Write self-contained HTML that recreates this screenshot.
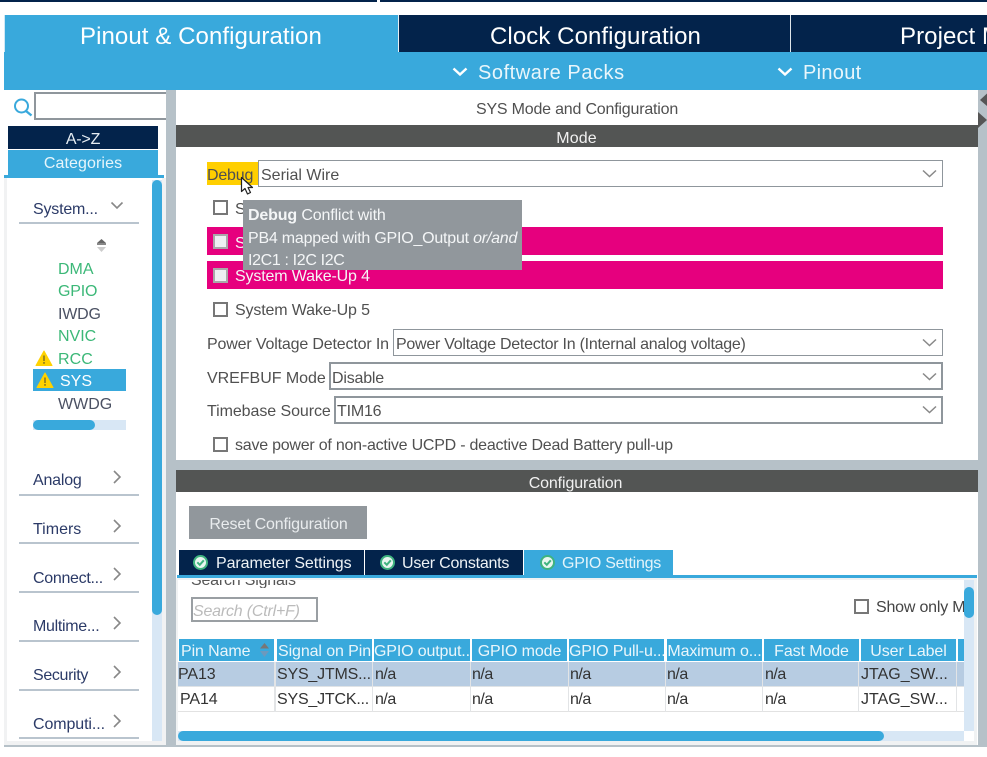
<!DOCTYPE html>
<html><head><meta charset="utf-8">
<style>
html,body{margin:0;padding:0;background:#fff}
#p{position:relative;width:987px;height:757px;overflow:hidden;background:#fff;font-family:"Liberation Sans",sans-serif;font-size:16px;color:#505050;letter-spacing:-.2px}
#p div,#p svg,#p span.a{position:absolute}
.t{white-space:nowrap;line-height:24px;height:24px}
.c{text-align:center}
.box{box-sizing:border-box;border:2px solid #8f969c;background:#fff}
.sel{box-sizing:border-box;border:2px solid #8f969c;background:#fff;height:28px}
.sel1{border-width:1px;height:27px}
.ck{box-sizing:border-box;width:15px;height:15px;border:2px solid #777;background:#fff}
.ckp{box-sizing:border-box;width:15px;height:15px;border:2px solid #a9a9a9;background:#eef0f2}
.hd{background:#39a9dc;color:#eaf6fb;height:22px;top:639px;line-height:26px;text-align:center;white-space:nowrap;overflow:hidden;letter-spacing:-.1px}
.cell{white-space:nowrap;line-height:24px;height:24px;color:#333;letter-spacing:-.1px}
.ln{background:#b9c4ce;height:2px;left:19px;width:120px}
.nav{color:#2b3a67}
.g{color:#3cb878}
.top{font-size:24px;color:#fff;height:24px;line-height:24px;letter-spacing:.08px}
.sub{font-size:20px;color:#e9f6fb;height:24px;line-height:24px}
</style></head>
<body><div id="p">
<!-- top -->
<div style="left:0;top:0;width:987px;height:2px;background:#03234b"></div>
<div style="left:377px;top:0;width:3px;height:2px;background:#fff"></div>
<div style="left:4px;top:15px;width:983px;height:75px;background:#39a9dc"></div>
<div style="left:4px;top:15px;width:1px;height:37px;background:#cfe8f5"></div>
<div style="left:399px;top:15px;width:588px;height:37px;background:#03234b"></div>
<div style="left:790px;top:15px;width:1px;height:37px;background:#dfe5ea"></div>
<div style="left:398px;top:15px;width:1px;height:37px;background:#e6edf2"></div>
<div class="t top" style="left:80px;top:25px">Pinout &amp; Configuration</div>
<div class="t top" style="left:490px;top:25px">Clock Configuration</div>
<div class="t top" style="left:900px;top:25px">Project Manager</div>
<svg style="left:452px;top:67px" width="16" height="10"><path d="M1.500 1.500L8 7.500L14.500 1.500" fill="none" stroke="#fff" stroke-width="2.400"/></svg>
<div class="t sub" style="left:478px;top:61px;letter-spacing:.55px">Software Packs</div>
<svg style="left:777px;top:67px" width="16" height="10"><path d="M1.500 1.500L8 7.500L14.500 1.500" fill="none" stroke="#fff" stroke-width="2.400"/></svg>
<div class="t sub" style="left:803px;top:61px;letter-spacing:.3px">Pinout</div>

<!-- gray structure -->
<div style="left:166px;top:90px;width:10px;height:657px;background:#b6c1c8"></div>
<div style="left:978px;top:90px;width:9px;height:657px;background:#b6c1c8"></div>
<div style="left:176px;top:460px;width:802px;height:10px;background:#b6c1c8"></div>
<div style="left:4px;top:745px;width:983px;height:2px;background:#b6c1c8"></div>
<svg style="left:978px;top:90px" width="9" height="40"><path d="M9 3.500V16L2 10Z" fill="#555"/><path d="M0 22L9 30L0 38Z" fill="#555"/></svg>

<!-- left -->
<svg style="left:12px;top:96px" width="22" height="22"><circle cx="9.500" cy="10" r="6.500" fill="none" stroke="#39a9dc" stroke-width="2"/><path d="M14 15L19.500 19.500" stroke="#39a9dc" stroke-width="2.400"/></svg>
<div class="box" style="left:34px;top:92px;width:132px;height:28px;border-right:0"></div>
<div style="left:8px;top:126px;width:150px;height:23px;background:#03234b;color:#e6edf3;text-align:center;line-height:28px;overflow:hidden">A-&gt;Z</div>
<div style="left:8px;top:150px;width:150px;height:26px;background:#39a9dc;color:#e6f5fb;text-align:center;line-height:27px;letter-spacing:.1px">Categories</div>
<div style="left:4px;top:175px;width:160px;height:3px;background:#39a9dc"></div>
<div style="left:4px;top:178px;width:162px;height:567px;background:#f1f2f3"></div>
<div style="left:7px;top:178px;width:155px;height:563px;background:#fff"></div>
<div style="left:152px;top:180px;width:10px;height:561px;background:#d8e7f5"></div>
<div style="left:152px;top:180px;width:10px;height:435px;background:#39a9dc;border-radius:5px"></div>

<div class="t nav" style="left:33px;top:198px">System...</div>
<svg style="left:110px;top:201px" width="14" height="10"><path d="M1.500 1.500L7 7L12.500 1.500" fill="none" stroke="#888" stroke-width="1.600"/></svg>
<div class="ln" style="top:222px"></div>
<svg style="left:95px;top:238px" width="13" height="15"><path d="M2 5L6.500 1L11 5Z" fill="#666"/><rect x="2" y="5" width="9" height="2" fill="#888"/><path d="M2 9H11L6.500 14Z" fill="#ccc"/></svg>
<div class="t g" style="left:58px;top:258px;letter-spacing:0">DMA</div>
<div class="t g" style="left:58px;top:280px">GPIO</div>
<div class="t" style="left:58px;top:303px;color:#4b5163">IWDG</div>
<div class="t g" style="left:58px;top:325px;letter-spacing:0">NVIC</div>
<svg style="left:35px;top:350px" width="18" height="16"><path d="M9 1L17 15.500H1Z" fill="#ffd200" stroke="#ffd200" stroke-linejoin="round"/><rect x="8.200" y="5.500" width="1.600" height="5.500" fill="#8a7a20"/><rect x="8.200" y="12" width="1.600" height="1.800" fill="#8a7a20"/></svg>
<div class="t g" style="left:58px;top:348px;letter-spacing:.1px">RCC</div>
<div style="left:33px;top:369px;width:93px;height:22px;background:#39a9dc"></div>
<svg style="left:36px;top:372px" width="18" height="16"><path d="M9 1L17 15.500H1Z" fill="#ffd200" stroke="#ffd200" stroke-linejoin="round"/><rect x="8.200" y="5.500" width="1.600" height="5.500" fill="#8a7a20"/><rect x="8.200" y="12" width="1.600" height="1.800" fill="#8a7a20"/></svg>
<div class="t" style="left:60px;top:370px;color:#fff;letter-spacing:0">SYS</div>
<div class="t" style="left:58px;top:393px;color:#4b5163;letter-spacing:0">WWDG</div>
<div style="left:33px;top:420px;width:93px;height:10px;background:#d8e7f5"></div>
<div style="left:33px;top:420px;width:62px;height:10px;background:#39a9dc;border-radius:5px"></div>

<div class="t nav" style="left:33px;top:469px">Analog</div>
<svg style="left:112px;top:469px" width="10" height="16"><path d="M2 2L8 8L2 14" fill="none" stroke="#888" stroke-width="1.600"/></svg>
<div class="ln" style="top:494px"></div>
<div class="t nav" style="left:33px;top:518px;letter-spacing:0">Timers</div>
<svg style="left:112px;top:518px" width="10" height="16"><path d="M2 2L8 8L2 14" fill="none" stroke="#888" stroke-width="1.600"/></svg>
<div class="ln" style="top:542px"></div>
<div class="t nav" style="left:33px;top:567px;letter-spacing:-.3px">Connect...</div>
<svg style="left:112px;top:566px" width="10" height="16"><path d="M2 2L8 8L2 14" fill="none" stroke="#888" stroke-width="1.600"/></svg>
<div class="ln" style="top:591px"></div>
<div class="t nav" style="left:33px;top:615px;letter-spacing:-.3px">Multime...</div>
<svg style="left:112px;top:615px" width="10" height="16"><path d="M2 2L8 8L2 14" fill="none" stroke="#888" stroke-width="1.600"/></svg>
<div class="ln" style="top:640px"></div>
<div class="t nav" style="left:33px;top:664px;letter-spacing:-.35px">Security</div>
<svg style="left:112px;top:664px" width="10" height="16"><path d="M2 2L8 8L2 14" fill="none" stroke="#888" stroke-width="1.600"/></svg>
<div class="ln" style="top:689px"></div>
<div class="t nav" style="left:33px;top:713px;letter-spacing:-.1px">Computi...</div>
<svg style="left:112px;top:713px" width="10" height="16"><path d="M2 2L8 8L2 14" fill="none" stroke="#888" stroke-width="1.600"/></svg>
<div class="ln" style="top:737px"></div>

<!-- mode panel -->
<div class="t c" style="left:176px;top:98px;width:802px">SYS Mode and Configuration</div>
<div style="left:176px;top:125px;width:802px;height:22px;background:#535554;color:#f1f1f1;text-align:center;line-height:28px;letter-spacing:.1px;text-indent:-1px;overflow:hidden">Mode</div>
<div style="left:207px;top:162px;width:51px;height:23px;background:#ffcf00"></div>
<div class="t" style="left:207px;top:164px">Debug</div>
<div class="sel sel1" style="left:258px;top:160px;width:685px"></div>
<div class="t" style="left:261px;top:164px;letter-spacing:0">Serial Wire</div>
<svg style="left:922px;top:169px" width="15" height="10"><path d="M1 1.500L7.500 7.500L14 1.500" fill="none" stroke="#888" stroke-width="1.500"/></svg>

<div class="ck" style="left:213px;top:200px"></div>
<div class="t" style="left:235px;top:198px;letter-spacing:-.15px">System Wake-Up 1</div>
<div style="left:207px;top:227px;width:736px;height:28px;background:#e6007e"></div>
<div class="ckp" style="left:213px;top:234px"></div>
<div class="t" style="left:235px;top:232px;color:#f5f5f5;letter-spacing:-.15px">System Wake-Up 2</div>
<div style="left:207px;top:261px;width:736px;height:28px;background:#e6007e"></div>
<div class="ckp" style="left:213px;top:268px"></div>
<div class="t" style="left:235px;top:265px;color:#f5f5f5;letter-spacing:-.15px">System Wake-Up 4</div>
<div class="ck" style="left:213px;top:302px"></div>
<div class="t" style="left:235px;top:299px;letter-spacing:-.15px">System Wake-Up 5</div>

<div class="t" style="left:207px;top:333px;letter-spacing:-.16px">Power Voltage Detector In</div>
<div class="sel sel1" style="left:393px;top:329px;width:550px"></div>
<div class="t" style="left:396px;top:333px;letter-spacing:-.26px">Power Voltage Detector In (Internal analog voltage)</div>
<svg style="left:922px;top:338px" width="15" height="10"><path d="M1 1.500L7.500 7.500L14 1.500" fill="none" stroke="#888" stroke-width="1.500"/></svg>
<div class="t" style="left:207px;top:367px;letter-spacing:-.03px">VREFBUF Mode</div>
<div class="sel" style="left:329px;top:362px;width:614px"></div>
<div class="t" style="left:332px;top:367px">Disable</div>
<svg style="left:922px;top:372px" width="15" height="10"><path d="M1 1.500L7.500 7.500L14 1.500" fill="none" stroke="#888" stroke-width="1.500"/></svg>
<div class="t" style="left:207px;top:400px;letter-spacing:-.07px">Timebase Source</div>
<div class="sel" style="left:334px;top:396px;width:609px"></div>
<div class="t" style="left:337px;top:400px">TIM16</div>
<svg style="left:922px;top:405px" width="15" height="10"><path d="M1 1.500L7.500 7.500L14 1.500" fill="none" stroke="#888" stroke-width="1.500"/></svg>
<div class="ck" style="left:213px;top:437px"></div>
<div class="t" style="left:235px;top:434px;letter-spacing:-.23px">save power of non-active UCPD - deactive Dead Battery pull-up</div>

<!-- tooltip -->
<div style="left:243px;top:200px;width:279px;height:70px;background:#91979c"></div>
<div class="t" style="left:248px;top:204px;color:#f4f6f7;letter-spacing:-.15px"><b>Debug</b> Conflict with</div>
<div class="t" style="left:248px;top:227px;color:#f4f6f7;letter-spacing:-.22px">PB4 mapped with GPIO_Output <i>or/and</i></div>
<div class="t" style="left:248px;top:249px;color:#f4f6f7;letter-spacing:-.35px">I2C1 : I2C I2C</div>
<svg style="left:240px;top:176px" width="15" height="20"><path d="M1.500 1.500V15.500L5 12.500L7.500 18L10.500 16.500L8 11.500H12.500Z" fill="#fff" stroke="#222" stroke-width="1.200" stroke-linejoin="round"/></svg>

<!-- config -->
<div style="left:176px;top:470px;width:802px;height:22px;background:#535554;color:#f1f1f1;text-align:center;line-height:28px;text-indent:-3px;letter-spacing:-.12px;overflow:hidden">Configuration</div>
<div style="left:189px;top:506px;width:178px;height:33px;background:#91979c;color:#e9ecee;text-align:center;line-height:38px;letter-spacing:-.17px;text-indent:1px;overflow:hidden">Reset Configuration</div>

<div style="left:179px;top:550px;width:185px;height:25px;background:#03234b"></div>
<div style="left:365px;top:550px;width:158px;height:25px;background:#03234b"></div>
<div style="left:524px;top:550px;width:149px;height:25px;background:#39a9dc"></div>
<div style="left:177px;top:575px;width:800px;height:3px;background:#39a9dc"></div>
<div style="left:177px;top:578px;width:800px;height:2px;background:#f0f2f3"></div>
<svg style="left:193px;top:555px" width="15" height="15"><circle cx="7.500" cy="7.500" r="7.500" fill="#3fb37f"/><circle cx="7.500" cy="7.500" r="5.500" fill="#e9f6f0"/><path d="M4.300 7.300L6.800 9.800L10.800 5.300" fill="none" stroke="#3fb37f" stroke-width="2"/></svg>
<div class="t" style="left:216px;top:552px;color:#eef3f6;letter-spacing:-.08px">Parameter Settings</div>
<svg style="left:380px;top:555px" width="15" height="15"><circle cx="7.500" cy="7.500" r="7.500" fill="#3fb37f"/><circle cx="7.500" cy="7.500" r="5.500" fill="#e9f6f0"/><path d="M4.300 7.300L6.800 9.800L10.800 5.300" fill="none" stroke="#3fb37f" stroke-width="2"/></svg>
<div class="t" style="left:402px;top:552px;color:#eef3f6;letter-spacing:-.22px">User Constants</div>
<svg style="left:540px;top:555px" width="15" height="15"><circle cx="7.500" cy="7.500" r="7.500" fill="#3fb37f"/><circle cx="7.500" cy="7.500" r="5.500" fill="#e9f6f0"/><path d="M4.300 7.300L6.800 9.800L10.800 5.300" fill="none" stroke="#3fb37f" stroke-width="2"/></svg>
<div class="t" style="left:562px;top:552px;color:#e4f4fa;letter-spacing:-.25px">GPIO Settings</div>

<div style="left:178px;top:580px;width:785px;height:8px;overflow:hidden"><div class="t" style="left:13px;top:-11px;color:#555">Search Signals</div></div>
<div class="box" style="left:191px;top:597px;width:127px;height:25px;border-color:#9a9fa3"></div>
<div class="t" style="left:193px;top:600px;color:#bbb;font-style:italic">Search (Ctrl+F)</div>
<div class="ck" style="left:854px;top:599px"></div>
<div style="left:876px;top:596px;width:88px;height:24px;overflow:hidden"><div class="t" style="left:0;top:0;color:#444">Show only Modified</div></div>

<div class="hd" style="left:179px;width:95px;text-align:left;text-indent:2px">Pin Name</div>
<svg style="left:259px;top:642px" width="11" height="16"><path d="M1 6.500L5.500 1L10 6.500Z" fill="#777"/><path d="M1 9H10L5.500 15Z" fill="#6d99bd"/></svg>
<div class="hd" style="left:277px;width:95px">Signal on Pin</div>
<div class="hd" style="left:374px;width:96px;letter-spacing:-.15px">GPIO output...</div>
<div class="hd" style="left:472px;width:95px">GPIO mode</div>
<div class="hd" style="left:569px;width:95px;letter-spacing:-.15px">GPIO Pull-u...</div>
<div class="hd" style="left:667px;width:95px;letter-spacing:-.15px">Maximum o...</div>
<div class="hd" style="left:764px;width:95px">Fast Mode</div>
<div class="hd" style="left:861px;width:95px">User Label</div>
<div class="hd" style="left:958px;width:6px"></div>

<div style="left:178px;top:662px;width:786px;height:24px;background:#b7cce2"></div>
<div style="left:178px;top:686px;width:786px;height:1px;background:#dfe3e6"></div>
<div style="left:178px;top:711px;width:786px;height:1px;background:#e2e2e2"></div>
<div style="left:274px;top:662px;width:2px;height:50px;background:#e2e4e6"></div>
<div style="left:372px;top:662px;width:1px;height:50px;background:#e2e4e6"></div>
<div style="left:470px;top:662px;width:1px;height:50px;background:#e2e4e6"></div>
<div style="left:568px;top:662px;width:1px;height:50px;background:#e2e4e6"></div>
<div style="left:665px;top:662px;width:1px;height:50px;background:#e2e4e6"></div>
<div style="left:762px;top:662px;width:1px;height:50px;background:#e2e4e6"></div>
<div style="left:858px;top:662px;width:1px;height:50px;background:#e2e4e6"></div>
<div style="left:956px;top:662px;width:1px;height:50px;background:#e2e4e6"></div>

<div class="cell" style="left:178px;top:663px">PA13</div>
<div class="cell" style="left:277px;top:663px;letter-spacing:-.2px">SYS_JTMS...</div>
<div class="cell" style="left:375px;top:663px;letter-spacing:-.5px">n/a</div>
<div class="cell" style="left:472px;top:663px;letter-spacing:-.5px">n/a</div>
<div class="cell" style="left:570px;top:663px;letter-spacing:-.5px">n/a</div>
<div class="cell" style="left:667px;top:663px;letter-spacing:-.5px">n/a</div>
<div class="cell" style="left:765px;top:663px;letter-spacing:-.5px">n/a</div>
<div class="cell" style="left:861px;top:663px;letter-spacing:0">JTAG_SW...</div>
<div class="cell" style="left:180px;top:688px">PA14</div>
<div class="cell" style="left:277px;top:688px;letter-spacing:-.2px">SYS_JTCK...</div>
<div class="cell" style="left:375px;top:688px;letter-spacing:-.5px">n/a</div>
<div class="cell" style="left:472px;top:688px;letter-spacing:-.5px">n/a</div>
<div class="cell" style="left:570px;top:688px;letter-spacing:-.5px">n/a</div>
<div class="cell" style="left:667px;top:688px;letter-spacing:-.5px">n/a</div>
<div class="cell" style="left:765px;top:688px;letter-spacing:-.5px">n/a</div>
<div class="cell" style="left:861px;top:688px;letter-spacing:0">JTAG_SW...</div>

<!-- scrollbars -->
<div style="left:964px;top:580px;width:10px;height:151px;background:#d8e7f5"></div>
<div style="left:964px;top:587px;width:10px;height:31px;background:#39a9dc;border-radius:5px"></div>
<div style="left:178px;top:731px;width:786px;height:10px;background:#d8e7f5"></div>
<div style="left:178px;top:731px;width:706px;height:10px;background:#39a9dc;border-radius:5px"></div>
<div style="left:177px;top:741px;width:800px;height:4px;background:#f0f2f3"></div>
<div style="left:974px;top:578px;width:3px;height:167px;background:#f0f2f3"></div>
<div style="left:176px;top:578px;width:2px;height:167px;background:#f0f2f3"></div>
</div></body></html>
